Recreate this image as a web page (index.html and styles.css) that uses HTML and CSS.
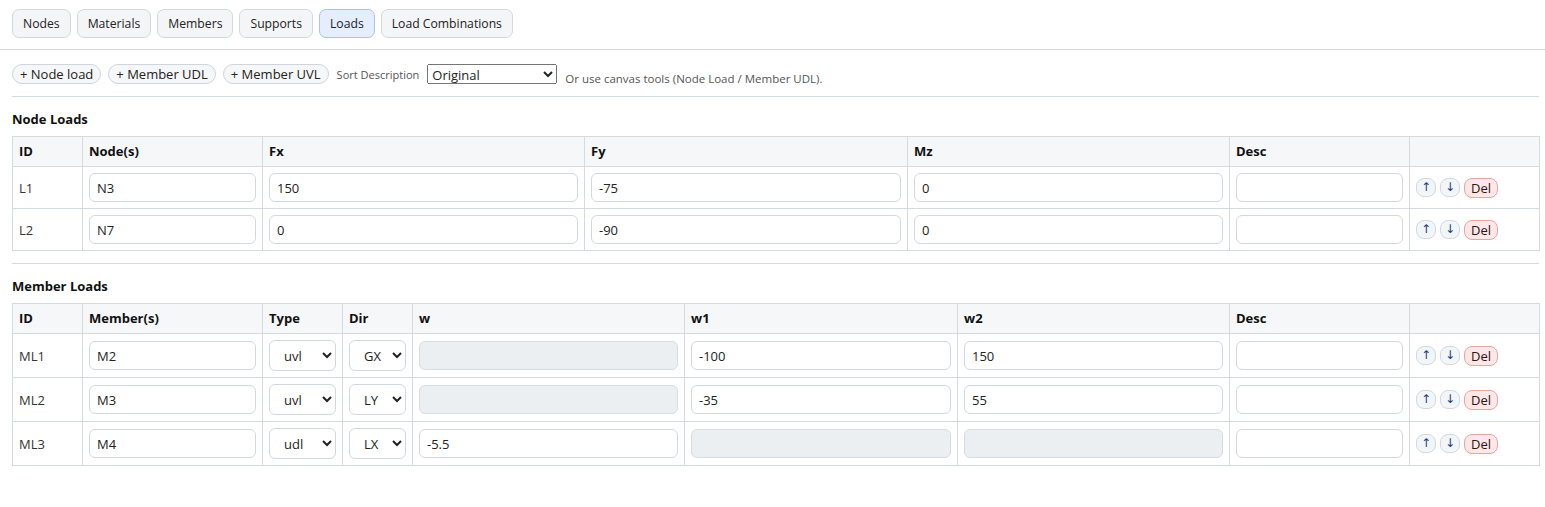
FILE: index.html
```html
<!DOCTYPE html>
<html lang="en">
<head>
<meta charset="utf-8">
<title>Loads</title>
<link rel="stylesheet" href="styles.css">
</head>
<body>
<div class="tabs">
  <button class="tab">Nodes</button>
  <button class="tab">Materials</button>
  <button class="tab">Members</button>
  <button class="tab">Supports</button>
  <button class="tab active">Loads</button>
  <button class="tab">Load Combinations</button>
</div>
<div class="panel">
  <div class="toolbar">
    <button class="pill">+ Node load</button>
    <button class="pill">+ Member UDL</button>
    <button class="pill">+ Member UVL</button>
    <span class="label">Sort Description</span>
    <select class="sort"><option>Original</option></select>
    <span class="hint">Or use canvas tools (Node Load / Member UDL).</span>
  </div>

  <section class="section">
    <h3 class="heading">Node Loads</h3>
    <table class="grid">
      <colgroup>
        <col class="c70"><col class="c180"><col class="c322"><col class="c323"><col class="c322"><col class="c180"><col class="c130">
      </colgroup>
      <thead>
        <tr><th>ID</th><th>Node(s)</th><th>Fx</th><th>Fy</th><th>Mz</th><th>Desc</th><th></th></tr>
      </thead>
      <tbody>
        <tr>
          <td>L1</td>
          <td><input class="field" value="N3"></td>
          <td><input class="field" value="150"></td>
          <td><input class="field" value="-75"></td>
          <td><input class="field" value="0"></td>
          <td><input class="field" value=""></td>
          <td><div class="acts"><button class="mini">↑</button><button class="mini">↓</button><button class="del">Del</button></div></td>
        </tr>
        <tr>
          <td>L2</td>
          <td><input class="field" value="N7"></td>
          <td><input class="field" value="0"></td>
          <td><input class="field" value="-90"></td>
          <td><input class="field" value="0"></td>
          <td><input class="field" value=""></td>
          <td><div class="acts"><button class="mini">↑</button><button class="mini">↓</button><button class="del">Del</button></div></td>
        </tr>
      </tbody>
    </table>
  </section>

  <section class="section">
    <h3 class="heading">Member Loads</h3>
    <table class="grid members">
      <colgroup>
        <col class="c70"><col class="c180"><col class="c80"><col class="c70"><col class="c272"><col class="c273"><col class="c272"><col class="c180"><col class="c130">
      </colgroup>
      <thead>
        <tr><th>ID</th><th>Member(s)</th><th>Type</th><th>Dir</th><th>w</th><th>w1</th><th>w2</th><th>Desc</th><th></th></tr>
      </thead>
      <tbody>
        <tr>
          <td>ML1</td>
          <td><input class="field" value="M2"></td>
          <td><select class="sel"><option>uvl</option><option>udl</option></select></td>
          <td><select class="sel"><option>GX</option><option>GY</option><option>LX</option><option>LY</option></select></td>
          <td><input class="field" disabled value=""></td>
          <td><input class="field" value="-100"></td>
          <td><input class="field" value="150"></td>
          <td><input class="field" value=""></td>
          <td><div class="acts"><button class="mini">↑</button><button class="mini">↓</button><button class="del">Del</button></div></td>
        </tr>
        <tr>
          <td>ML2</td>
          <td><input class="field" value="M3"></td>
          <td><select class="sel"><option>uvl</option><option>udl</option></select></td>
          <td><select class="sel"><option>LY</option><option>GX</option><option>GY</option><option>LX</option></select></td>
          <td><input class="field" disabled value=""></td>
          <td><input class="field" value="-35"></td>
          <td><input class="field" value="55"></td>
          <td><input class="field" value=""></td>
          <td><div class="acts"><button class="mini">↑</button><button class="mini">↓</button><button class="del">Del</button></div></td>
        </tr>
        <tr>
          <td>ML3</td>
          <td><input class="field" value="M4"></td>
          <td><select class="sel"><option>udl</option><option>uvl</option></select></td>
          <td><select class="sel"><option>LX</option><option>LY</option><option>GX</option><option>GY</option></select></td>
          <td><input class="field" value="-5.5"></td>
          <td><input class="field" disabled value=""></td>
          <td><input class="field" disabled value=""></td>
          <td><input class="field" value=""></td>
          <td><div class="acts"><button class="mini">↑</button><button class="mini">↓</button><button class="del">Del</button></div></td>
        </tr>
      </tbody>
    </table>
  </section>
</div>
</body>
</html>
```

FILE: styles.css
```css
* { box-sizing: border-box; }

html, body {
  margin: 0;
  background: #ffffff;
  color: #1f2328;
  font-family: "Open Sans", "Noto Sans", "Liberation Sans", sans-serif;
  font-size: 13px;
}

button, input, select {
  font-family: inherit;
  color: inherit;
}

.tabs {
  display: flex;
  gap: 6px;
  padding: 9px 12px 11px;
  border-bottom: 1px solid #d6d6d6;
}

.tab {
  height: 29px;
  padding: 0 10px;
  font-size: 12.2px;
  background: #f4f5f7;
  border: 1px solid #d4d9df;
  border-radius: 7px;
  color: #222;
}

.tab.active {
  background: #e5eeff;
  border-color: #a8c2f4;
}

.panel {
  padding: 14px 6px 0 12px;
}

.toolbar {
  display: flex;
  align-items: center;
  gap: 7px;
  padding-bottom: 12px;
  border-bottom: 1px solid #d3dae2;
}

.pill {
  height: 20px;
  padding: 0 7px;
  font-size: 13px;
  line-height: 18px;
  background: #f6f7f9;
  border: 1px solid #cfd5dc;
  border-radius: 10px;
  color: #222;
}

.label {
  margin-left: 1px;
  font-size: 11px;
  color: #555;
}

.sort {
  width: 130px;
  height: 20px;
  font-size: 13px;
  margin-left: 1px;
}

.hint {
  font-size: 11.5px;
  color: #555;
  align-self: flex-end;
  margin-bottom: -2px;
  margin-left: 1px;
}

.section + .section {
  margin-top: 12px;
  border-top: 1px solid #d3dae2;
}

.heading {
  margin: 13px 0 8px;
  font-size: 13px;
  font-weight: 700;
  line-height: 18px;
  color: #111;
}

.grid {
  width: 100%;
  table-layout: fixed;
  border-collapse: collapse;
}

.c70 { width: 70px; }
.c80 { width: 80px; }
.c130 { width: 130px; }
.c180 { width: 180px; }
.c272 { width: 272px; }
.c273 { width: 273px; }
.c322 { width: 322px; }
.c323 { width: 323px; }

.grid th, .grid td {
  border: 1px solid #d5dae1;
  padding: 6px;
  text-align: left;
  vertical-align: middle;
}

.grid th {
  height: 30px;
  font-weight: 700;
  background: #f6f7f9;
  color: #111;
  line-height: 17px;
}

.grid td {
  height: 42px;
  color: #333;
}

.members td {
  height: 44px;
}

.field {
  display: block;
  width: 100%;
  height: 29px;
  padding: 0 7px;
  font-size: 13px;
  border: 1px solid #d3d8df;
  border-radius: 6px;
  background: #fff;
  color: #222;
  outline: none;
}

.field:disabled {
  background: #eceff2;
  border-color: #d7dce2;
}

.sel {
  display: block;
  width: 100%;
  height: 31px;
  padding: 0 6px 0 10px;
  font-size: 13px;
  border: 1px solid #d3d8df;
  border-radius: 6px;
  background: #fff;
  color: #222;
}

.acts {
  display: flex;
  align-items: center;
  gap: 4px;
}

.mini {
  width: 20px;
  height: 19px;
  padding: 0;
  font-family: "DejaVu Sans", sans-serif;
  font-size: 12px;
  line-height: 17px;
  background: #f3f6f9;
  border: 1px solid #d3d8df;
  border-radius: 8px;
  color: #1e3a8a;
}

.del {
  height: 20px;
  padding: 0 6px;
  font-size: 13px;
  line-height: 18px;
  background: #fde7e7;
  border: 1px solid #f3a0a0;
  border-radius: 8px;
  color: #2a1414;
}
```
